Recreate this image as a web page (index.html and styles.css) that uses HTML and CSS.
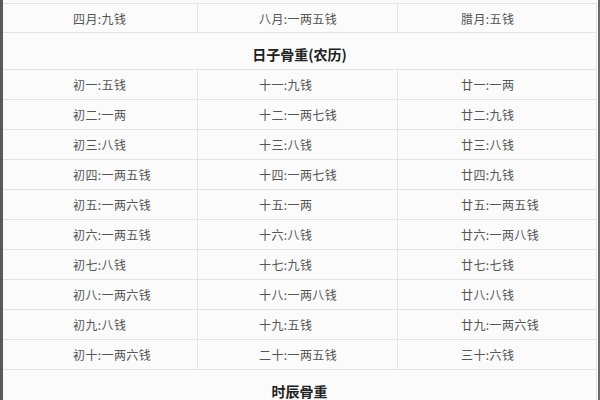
FILE: index.html
```html
<!DOCTYPE html>
<html lang="zh">
<head>
<meta charset="utf-8">
<link rel="stylesheet" href="styles.css">
</head>
<body>
<div class="frame">
  <div class="row first">
    <div class="cell c1">四月:九钱</div>
    <div class="cell c2">八月:一两五钱</div>
    <div class="cell c3">腊月:五钱</div>
  </div>
  <div class="row title">日子骨重(农历)</div>
  <div class="row"><div class="cell c1">初一:五钱</div><div class="cell c2">十一:九钱</div><div class="cell c3">廿一:一两</div></div>
  <div class="row"><div class="cell c1">初二:一两</div><div class="cell c2">十二:一两七钱</div><div class="cell c3">廿二:九钱</div></div>
  <div class="row"><div class="cell c1">初三:八钱</div><div class="cell c2">十三:八钱</div><div class="cell c3">廿三:八钱</div></div>
  <div class="row"><div class="cell c1">初四:一两五钱</div><div class="cell c2">十四:一两七钱</div><div class="cell c3">廿四:九钱</div></div>
  <div class="row"><div class="cell c1">初五:一两六钱</div><div class="cell c2">十五:一两</div><div class="cell c3">廿五:一两五钱</div></div>
  <div class="row"><div class="cell c1">初六:一两五钱</div><div class="cell c2">十六:八钱</div><div class="cell c3">廿六:一两八钱</div></div>
  <div class="row"><div class="cell c1">初七:八钱</div><div class="cell c2">十七:九钱</div><div class="cell c3">廿七:七钱</div></div>
  <div class="row"><div class="cell c1">初八:一两六钱</div><div class="cell c2">十八:一两八钱</div><div class="cell c3">廿八:八钱</div></div>
  <div class="row"><div class="cell c1">初九:八钱</div><div class="cell c2">十九:五钱</div><div class="cell c3">廿九:一两六钱</div></div>
  <div class="row"><div class="cell c1">初十:一两六钱</div><div class="cell c2">二十:一两五钱</div><div class="cell c3">三十:六钱</div></div>
  <div class="row title last">时辰骨重</div>
</div>
</body>
</html>
```
FILE: styles.css
```css
html, body {
  margin: 0;
  padding: 0;
  background: #fbfbfb;
}
body {
  font-family: "Noto Sans CJK SC", "Noto Sans", sans-serif;
  width: 600px;
  height: 400px;
  overflow: hidden;
}
.frame {
  box-sizing: border-box;
  width: 600px;
  height: 400px;
  border-left: 3px solid #5a5a5a;
  border-right: 2px solid #6a6a6a;
  padding: 3px 1px 0 0;
  background: #fbfbfb;
}
.row {
  box-sizing: border-box;
  display: grid;
  grid-template-columns: 195px 200px 199px;
  height: 30px;
  border-bottom: 1px solid #e2e2e2;
  border-right: 1px solid #e2e2e2;
}
.row.first {
  border-top: 1px solid #e2e2e2;
}
.cell {
  display: flex;
  align-items: center;
  font-size: 12px;
  color: #555;
  border-right: 1px solid #e4e4e4;
  letter-spacing: 0.4px;
}
.cell.c3 { border-right: none; }
.c1 { padding-left: 70px; }
.c2 { padding-left: 61px; }
.c3 { padding-left: 63px; }
.row.title {
  display: flex;
  align-items: center;
  justify-content: center;
  height: 37px;
  font-size: 14px;
  font-weight: bold;
  color: #222;
  padding-top: 6px;
}
.row.title.last {
  height: 31px;
  border-bottom: none;
  padding-top: 10px;
}
```
